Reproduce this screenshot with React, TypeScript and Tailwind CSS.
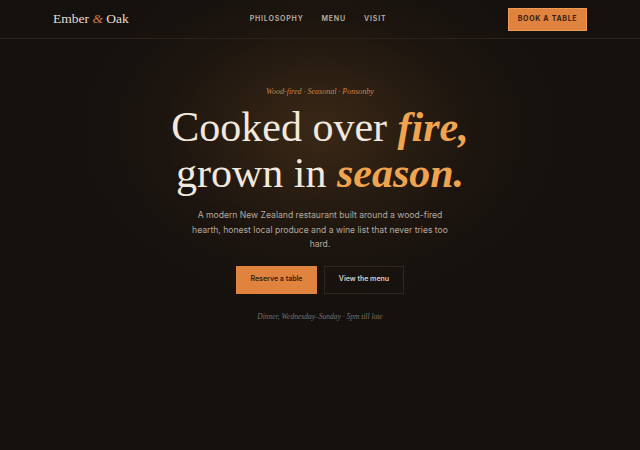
const serif = { fontFamily: '"Liberation Serif", "DejaVu Serif", serif' };

function Header() {
  return (
    <header className="flex h-[39px] items-center border-b border-[#2a221b] px-[53px]">
      <div className="flex-1 text-[13.5px] text-[#e6ddd2]" style={serif}>
        Ember <span className="italic text-[#d07a3c]">&amp;</span> Oak
      </div>
      <nav className="flex gap-[18px] pr-[4px] text-[7px] font-semibold tracking-[0.12em] text-[#bdb3a8]">
        <a>PHILOSOPHY</a>
        <a>MENU</a>
        <a>VISIT</a>
      </nav>
      <div className="flex flex-1 justify-end">
        <button className="h-[23px] w-[79px] border border-[#f09a55] bg-[#e0833f] text-[7px] font-bold tracking-[0.1em] text-[#3a1d0c]">
          BOOK A TABLE
        </button>
      </div>
    </header>
  );
}

export default function App() {
  return (
    <div
      className="relative h-[450px] w-[640px] overflow-hidden bg-[#15110e]"
      style={{ fontFamily: 'Inter, "Liberation Sans", sans-serif' }}
    >
      <div className="pointer-events-none absolute left-[70px] top-[-50px] h-[360px] w-[500px] bg-[radial-gradient(ellipse_at_center,rgba(120,78,34,0.38)_0%,rgba(60,38,18,0.17)_45%,rgba(21,17,14,0)_72%)]" />
      <div className="relative">
        <Header />
        <main className="flex flex-col items-center pt-[47px] text-center">
          <p className="text-[8px] italic text-[#c98448]" style={serif}>
            Wood-fired · Seasonal · Ponsonby
          </p>
          <h1
            className="mt-[6px] text-[42px] leading-[46px] text-[#f1e9df]"
            style={serif}
          >
            Cooked over <em className="font-semibold text-[#f0a450]">fire,</em>
            <br />
            grown in <em className="font-semibold text-[#f0a450]">season.</em>
          </h1>
          <p className="mt-[12px] w-[262px] text-[8.6px] leading-[14.5px] text-[#b5aa9e]">
            A modern New Zealand restaurant built around a wood-fired hearth, honest local produce and a wine list that never tries too hard.
          </p>
          <div className="mt-[14px] flex gap-[7px]">
            <button className="h-[28px] w-[81px] bg-[#e0833f] text-[7px] font-semibold text-[#3a1d0c]">
              Reserve a table
            </button>
            <button className="h-[28px] w-[80px] border border-[#2e2720] text-[7px] font-semibold text-[#d8cfc4]">
              View the menu
            </button>
          </div>
          <p className="mt-[17px] text-[7.5px] italic text-[#7b7168]" style={serif}>
            Dinner, Wednesday–Sunday · 5pm till late
          </p>
        </main>
      </div>
    </div>
  );
}
